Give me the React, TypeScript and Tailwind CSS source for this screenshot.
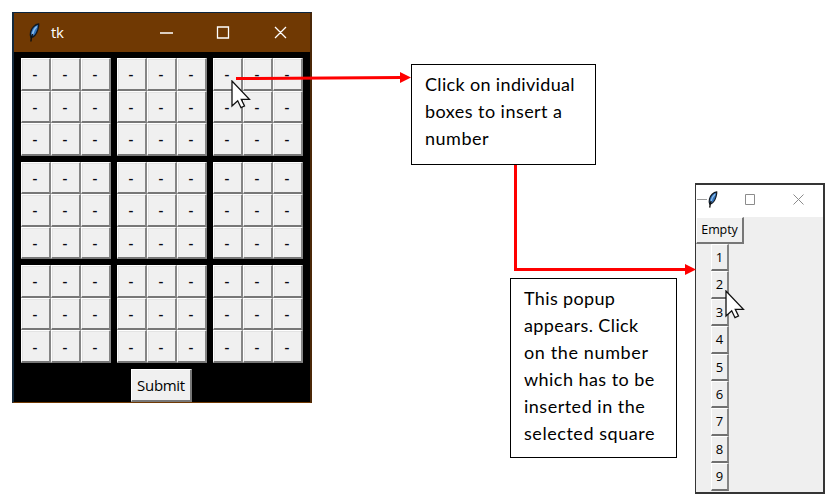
import React from "react";

const dividers = [0, 1, 2];
const digits = ["1", "2", "3", "4", "5", "6", "7", "8", "9"];

function Feather({ className }: { className: string }) {
  return (
    <svg className={className} viewBox="0 0 12 20" fill="none">
      <path d="M10.700 1C7 1.400 3.500 5 2.600 9c-.5 2.300-.4 4 .3 5.500C6 14 8.500 11 9.700 7c.6-2.300 1.300-4 1-6Z" fill="#3273bd" stroke="#101820" strokeWidth="1.300" />
      <path d="M8.800 3.500C6.500 5.500 5 8 4.200 12" stroke="#8dbde9" strokeWidth="1.500" />
      <path d="M4.500 11C3.700 13 3.200 15 2.900 18.500" stroke="#101010" strokeWidth="1.500" />
    </svg>
  );
}

function Cursor({ className }: { className: string }) {
  return (
    <svg className={className} viewBox="0 0 20 29">
      <path d="M1 1V26L6.700 20.800L10 27.700L13.500 26L10.300 19.300H18.400Z" fill="#fff" stroke="#111" strokeWidth="1.300" />
    </svg>
  );
}

function Block() {
  return (
    <div className="grid h-[97.600px] w-[90px] grid-cols-3 grid-rows-3">
      {digits.map((d) => (
        <button key={d} className="flex items-center justify-center border-t border-r-2 border-b-2 border-l border-t-white border-r-[#858585] border-b-[#777777] border-l-white bg-[#f0f0f0] pr-px shadow-[inset_1px_1px_0_#e3e3e3]">
          <span className="text-[15px] leading-none font-semibold text-[#090912]">-</span>
        </button>
      ))}
    </div>
  );
}

function MainWindow() {
  return (
    <section className="absolute top-3 left-3 flex h-[391px] w-[300px] flex-col border-t border-r-2 border-b border-l-2 border-t-[#0a2540] border-r-[#4b2808] border-b-[#703903] border-l-[#142a3d] bg-black font-['Open_Sans',sans-serif]">
      <header className="flex h-[39px] shrink-0 items-center bg-[#703903] text-white">
        <Feather className="ml-[14px] h-5 w-3" />
        <span className="ml-[11px] text-[15px] tracking-[-0.300px]">tk</span>
        <svg className="ml-[96px] h-4 w-32" viewBox="0 0 128 16" fill="none" stroke="white" strokeWidth="1.300">
          <path d="M0 8H13M57.500 2H68.500V13H57.500ZM115 2L126 13M126 2L115 13" />
        </svg>
      </header>
      <div className="mt-[6px] ml-[7px] grid w-[282px] grid-cols-3 gap-x-[6px] gap-y-[6px]">
        {dividers.flatMap((r) => dividers.map((c) => <Block key={`${r}-${c}`} />))}
      </div>
      <button className="mt-[6px] ml-[117px] flex h-[33px] w-[61px] items-center justify-center border-t border-r-2 border-b-2 border-l border-t-white border-r-[#777] border-b-[#777] border-l-white bg-[#f0f0f0] text-[15px] tracking-[-0.300px] text-black">
        Submit
      </button>
    </section>
  );
}

function Popup() {
  return (
    <section className="absolute top-[183px] left-[695px] flex h-[311px] w-[130px] flex-col border border-t-2 border-r-2 border-b-2 border-[#353535] bg-[#efefef] font-['Open_Sans',sans-serif] text-[13px] text-black">
      <header className="h-[32px] shrink-0 bg-white">
        <div className="flex h-full items-center pb-[2px]">
          <svg className="h-5 w-[11px]" viewBox="0 0 11 20">
            <path d="M1 9.500H11" stroke="#999" />
          </svg>
          <Feather className="h-[18px] w-[11px]" />
          <svg className="ml-[27px] h-4 w-16" viewBox="0 0 64 16" fill="none" stroke="#8c8c8c">
            <path d="M.5 2.500H9.500V12.500H.5ZM48.500 2.500L58.500 12.500M58.500 2.500L48.500 12.500" />
          </svg>
        </div>
      </header>
      <button className="flex h-[27px] w-[48px] shrink-0 items-center justify-center border-t border-r-2 border-b-2 border-l border-t-white border-r-[#777] border-b-[#777] border-l-white bg-[#f0f0f0] text-[12.500px] tracking-[-0.100px]">
        Empty
      </button>
      <div className="ml-[15px] flex w-[18px] flex-col">
        {digits.map((d) => (
          <button key={d} className="flex h-[27.400px] items-center justify-center border-t border-r-2 border-b-2 border-l border-t-white border-r-[#858585] border-b-[#707070] border-l-white pt-px">
            {d}
          </button>
        ))}
      </div>
    </section>
  );
}

export default function App() {
  return (
    <main className="relative h-[503px] w-[836px] overflow-hidden bg-white">
      <MainWindow />
      <aside className="absolute top-[64px] left-[411px] h-[101px] w-[185px] border border-black bg-white pt-[6px] pl-[13px] font-[Lato,sans-serif] text-[18px] leading-[27px] whitespace-nowrap text-black">
        <p className="tracking-[0.340px]">Click on individual</p>
        <p className="tracking-[0.450px]">boxes to insert a</p>
        <p className="tracking-[0.500px]">number</p>
      </aside>
      <aside className="absolute top-[278px] left-[510px] h-[180px] w-[167px] border border-black bg-white pt-[6px] pl-[13px] font-[Lato,sans-serif] text-[18px] leading-[27px] tracking-[0.500px] whitespace-nowrap text-black">
        <p className="tracking-[0.350px]">This popup</p>
        <p className="tracking-[0.400px]">appears. Click</p>
        <p className="tracking-[0.620px]">on the number</p>
        <p className="tracking-[0.450px]">which has to be</p>
        <p>inserted in the</p>
        <p className="tracking-[0.550px]">selected square</p>
      </aside>
      <Popup />
      <svg className="absolute inset-0 h-[503px] w-[836px]" viewBox="0 0 836 503" fill="none" stroke="red" strokeWidth="3">
        <path d="M236 78.500L402 77.500M515.500 165V269.500H686" />
        <path d="M400 72L411 77.500L400 83ZM685 264L696 269.500L685 275Z" fill="red" stroke="none" />
      </svg>
      <Cursor className="absolute top-[80px] left-[231px] h-[29px] w-5" />
      <Cursor className="absolute top-[290px] left-[725px] h-[29px] w-5" />
    </main>
  );
}
